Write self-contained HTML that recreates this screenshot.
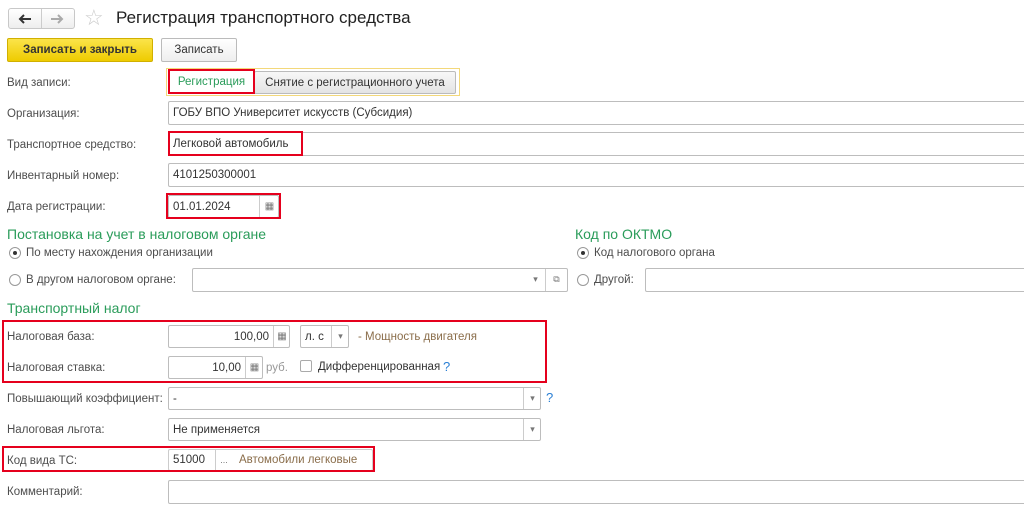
<!DOCTYPE html>
<html><head><meta charset="utf-8"><style>
body{margin:0;width:1024px;height:507px;background:#fff;position:relative;overflow:hidden;font-family:"Liberation Sans",Arial,sans-serif;font-size:11.5px;color:#4d4d4d}
div,span{position:absolute;box-sizing:border-box}
.l{left:7px;line-height:16px;white-space:nowrap}
.in{border:1px solid #bdbdbd;border-radius:2px;background:#fff;color:#333;padding-left:4px;line-height:22px;white-space:nowrap}
.red{border:2px solid #e5001d}
.g{color:#2a9c5a;font-size:14px;white-space:nowrap}
.rad{width:12px;height:12px;border:1px solid #999;border-radius:50%;background:#fff}
.dot::after{content:"";position:absolute;left:3px;top:3px;width:4px;height:4px;border-radius:50%;background:#333}
.btn{border-left:1px solid #ccc;top:0;bottom:0;text-align:center;color:#777;font-size:9px;line-height:21px}
.br{color:#8a6d4a;white-space:nowrap}
</style></head><body>
<div style="left:8px;top:8px;width:67px;height:21px;border:1px solid #c8c8c8;border-radius:3px;background:linear-gradient(#fff,#eee)"><span style="left:32px;top:0;bottom:0;border-left:1px solid #ccc"></span>
<svg style="position:absolute;left:9px;top:4px" width="14" height="12" viewBox="0 0 14 12"><path d="M13 6H2M6 2L2 6l4 4" stroke="#333" stroke-width="2" fill="none"/></svg>
<svg style="position:absolute;left:41px;top:4px" width="14" height="12" viewBox="0 0 14 12"><path d="M1 6h11M8 2l4 4-4 4" stroke="#aaa" stroke-width="2" fill="none"/></svg></div>
<div style="left:84px;top:6px;font-size:22px;color:#ccc;line-height:24px">☆</div>
<div style="left:116px;top:8px;font-size:17px;color:#222;line-height:20px;white-space:nowrap">Регистрация транспортного средства</div>
<div style="left:7px;top:38px;width:146px;height:24px;background:linear-gradient(#fbe44a,#eecb00);border:1px solid #d1b000;border-radius:2px;color:#333;font-weight:bold;text-align:center;line-height:22px">Записать и закрыть</div>
<div style="left:161px;top:38px;width:76px;height:24px;border:1px solid #bbb;border-radius:2px;background:linear-gradient(#fff,#eee);color:#333;text-align:center;line-height:22px">Записать</div>
<div class="l" style="top:75px">Вид записи:</div>
<div style="left:166px;top:68px;width:294px;height:28px;border:1px solid #f3d87a"></div>
<div style="left:254px;top:71px;width:202px;height:23px;border:1px solid #bbb;border-radius:2px;background:linear-gradient(#f7f7f7,#e4e4e4);color:#333;text-align:center;line-height:22px">Снятие с регистрационного учета</div>
<div class="red" style="left:168px;top:69px;width:87px;height:25px;color:#2a9c5a;text-align:center;line-height:22px;background:#fff">Регистрация</div>
<div class="l" style="top:106px">Организация:</div>
<div class="in" style="left:168px;top:101px;width:870px;height:24px">ГОБУ ВПО Университет искусств (Субсидия)</div>
<div class="l" style="top:137px">Транспортное средство:</div>
<div class="in" style="left:168px;top:132px;width:870px;height:24px">Легковой автомобиль</div>
<div class="red" style="left:168px;top:131px;width:135px;height:25px"></div>
<div class="l" style="top:168px">Инвентарный номер:</div>
<div class="in" style="left:168px;top:163px;width:870px;height:24px">4101250300001</div>
<div class="l" style="top:199px">Дата регистрации:</div>
<div class="in" style="left:168px;top:195px;width:111px;height:23px">01.01.2024<span class="btn" style="left:90px;width:20px;font-size:10px">▦</span></div>
<div class="red" style="left:166px;top:193px;width:115px;height:26px"></div>
<div class="g" style="left:7px;top:226px">Постановка на учет в налоговом органе</div>
<div class="g" style="left:575px;top:226px">Код по ОКТМО</div>
<div class="rad dot" style="left:9px;top:247px"></div><div class="l" style="left:26px;top:245px">По месту нахождения организации</div>
<div class="rad" style="left:9px;top:274px"></div><div class="l" style="left:26px;top:272px">В другом налоговом органе:</div>
<div class="in" style="left:192px;top:268px;width:376px;height:24px"><span class="btn" style="left:332px;width:21px;border:none">▾</span><span class="btn" style="left:352px;width:22px">⧉</span></div>
<div class="rad dot" style="left:577px;top:247px"></div><div class="l" style="left:594px;top:245px">Код налогового органа</div>
<div class="rad" style="left:577px;top:274px"></div><div class="l" style="left:594px;top:272px">Другой:</div>
<div class="in" style="left:645px;top:268px;width:390px;height:24px"></div>
<div class="g" style="left:7px;top:300px">Транспортный налог</div>
<div class="red" style="left:2px;top:320px;width:545px;height:63px"></div>
<div class="l" style="top:329px">Налоговая база:</div>
<div class="in" style="left:168px;top:325px;width:122px;height:23px;text-align:right;padding-right:20px">100,00<span class="btn" style="left:104px;width:17px;font-size:10px">▦</span></div>
<div class="in" style="left:300px;top:325px;width:49px;height:23px">л. с<span class="btn" style="left:30px;width:18px">▾</span></div>
<div class="br" style="left:358px;top:329px;line-height:16px">- Мощность двигателя</div>
<div class="l" style="top:360px">Налоговая ставка:</div>
<div class="in" style="left:168px;top:356px;width:95px;height:23px;text-align:right;padding-right:21px">10,00<span class="btn" style="left:76px;width:18px;font-size:10px">▦</span></div>
<div class="br" style="left:266px;top:360px;color:#999;line-height:16px">руб.</div>
<div style="left:300px;top:360px;width:12px;height:12px;border:1px solid #aaa;border-radius:2px"></div>
<div class="l" style="left:318px;top:359px;color:#333">Дифференцированная</div>
<div style="left:443px;top:359px;color:#2a7fd4;font-size:13px">?</div>
<div class="l" style="top:391px">Повышающий коэффициент:</div>
<div class="in" style="left:168px;top:387px;width:373px;height:23px">-<span class="btn" style="left:354px;width:18px">▾</span></div>
<div style="left:546px;top:390px;color:#2a7fd4;font-size:13px">?</div>
<div class="l" style="top:422px">Налоговая льгота:</div>
<div class="in" style="left:168px;top:418px;width:373px;height:23px">Не применяется<span class="btn" style="left:354px;width:18px">▾</span></div>
<div class="l" style="top:453px">Код вида ТС:</div>
<div class="in" style="left:168px;top:449px;width:205px;height:22px;border-color:#ccc;line-height:20px">51000<span class="btn" style="left:46px;width:17px;line-height:20px">...</span><span class="br" style="left:70px;top:0;line-height:20px">Автомобили легковые</span></div>
<div class="red" style="left:2px;top:446px;width:373px;height:26px"></div>
<div class="l" style="top:484px">Комментарий:</div>
<div class="in" style="left:168px;top:480px;width:870px;height:24px"></div>
</body></html>
